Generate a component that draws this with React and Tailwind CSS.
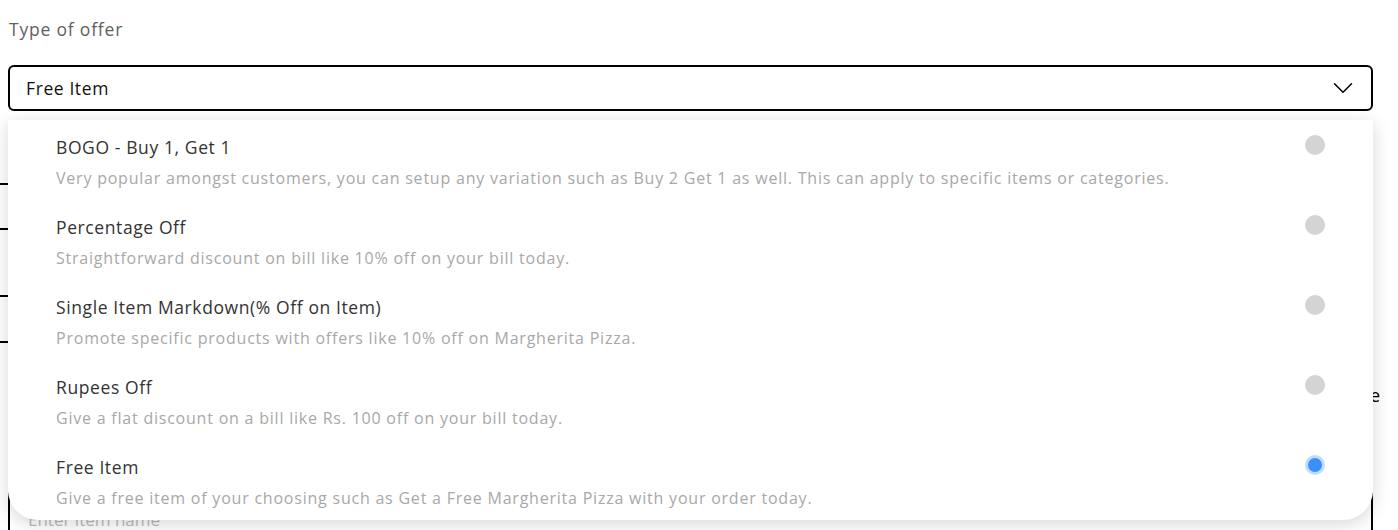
import { ChevronDown } from 'lucide-react';

const options = [
  {
    title: 'BOGO - Buy 1, Get 1',
    desc: 'Very popular amongst customers, you can setup any variation such as Buy 2 Get 1 as well. This can apply to specific items or categories.',
  },
  { title: 'Percentage Off', desc: 'Straightforward discount on bill like 10% off on your bill today.' },
  { title: 'Single Item Markdown(% Off on Item)', desc: 'Promote specific products with offers like 10% off on Margherita Pizza.' },
  { title: 'Rupees Off', desc: 'Give a flat discount on a bill like Rs. 100 off on your bill today.' },
  { title: 'Free Item', desc: 'Give a free item of your choosing such as Get a Free Margherita Pizza with your order today.' },
];

const selected = 'Free Item';

function Radio({ checked }) {
  if (checked) {
    return (
      <span className="flex h-5 w-5 items-center justify-center rounded-full bg-[#bfdcfc]">
        <span className="h-[14px] w-[14px] rounded-full bg-[#3b8ff6]" />
      </span>
    );
  }
  return <span className="block h-5 w-5 rounded-full bg-[#d4d4d4]" />;
}

export default function App() {
  return (
    <div className="relative h-[530px] w-[1398px] overflow-hidden bg-white font-['Open_Sans',sans-serif]">
      <div className="pl-[9px] pt-[17px] text-[17.5px] font-medium leading-6 tracking-[0.8px] text-[#5f5f5f]">Type of offer</div>

      <div className="ml-2 mt-6 flex h-[46px] w-[1365px] items-center justify-between rounded-md border-2 border-black pl-4 pr-[11px]">
        <span className="text-[17.5px] font-medium tracking-[0.6px] text-[#111]">{selected}</span>
        <ChevronDown className="h-[34px] w-[34px] text-black" strokeWidth={1.1} />
      </div>

      {/* form fields hidden under the open menu */}
      <div className="relative mt-[9px]">
        <div className="h-[65px] w-[600px] border-b-2 border-black" />
        <div className="h-[45px] w-[600px] border-b-2 border-black" />
        <div className="h-[67px] w-[600px] border-b-2 border-black" />
        <div className="h-[46px] w-[600px] border-b-2 border-black" />
        <div className="flex h-[39px] justify-end pr-[18px] pt-[40px] text-[18px] leading-6 text-black">Type</div>
        <div className="ml-2 mt-[106px] h-[60px] w-[1365px] rounded-t-md border-x-2 border-t-2 border-black pl-[18px] pt-[16px] text-[17px] text-[#bbb]">
          Enter item name
        </div>

        <div className="absolute left-2 top-0 w-[1365px] rounded-b-[30px] bg-white shadow-[0_4px_18px_rgba(0,0,0,0.16)]">
          {options.map((o) => (
            <div key={o.title} className="flex h-20 items-start justify-between pl-12 pr-12 pt-[15px]">
              <div>
                <div className="text-[17.5px] font-medium leading-6 tracking-[0.6px] text-[#333]">{o.title}</div>
                <div className="mt-2 text-[16px] font-medium leading-[22px] tracking-[0.78px] text-[#a8a8a8]">{o.desc}</div>
              </div>
              <Radio checked={o.title === selected} />
            </div>
          ))}
        </div>
      </div>
    </div>
  );
}
